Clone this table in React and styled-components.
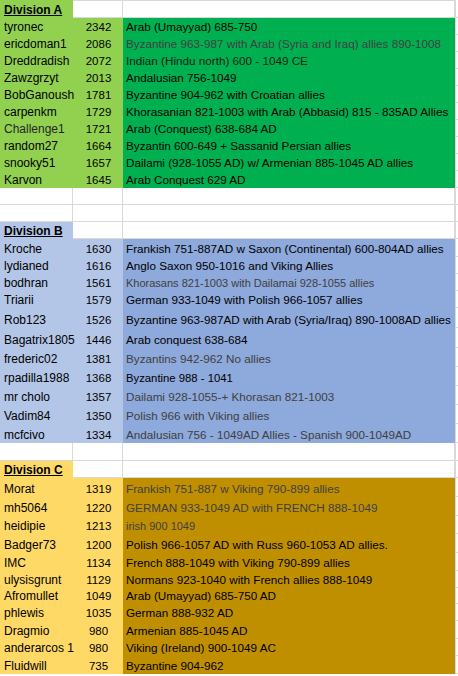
import React from 'react'
import styled, { createGlobalStyle } from 'styled-components'

const GlobalStyle = createGlobalStyle`
  html, body {
    margin: 0;
    padding: 0;
    background: #ffffff;
  }
  body {
    font-family: "Liberation Sans", Arial, sans-serif;
    font-size: 12px;
    color: #000;
  }
`

const GRID = '#d9d9d9'

const fills = {
  A: { light: '#92d050', dark: '#00b050' },
  B: { light: '#b4c6e7', dark: '#8ea9db' },
  C: { light: '#ffd966', dark: '#bf8f00' },
}

const Sheet = styled.div`
  width: 458px;
  display: flex;
  flex-direction: column;
  overflow: hidden;
`

const Row = styled.div`
  display: grid;
  grid-template-columns: 73px 50px 332px 1fr;
  height: ${p => p.$h}px;
`

const Cell = styled.div`
  display: flex;
  align-items: flex-end;
  padding-bottom: 1px;
  line-height: 14px;
  white-space: nowrap;
  overflow: visible;
  box-sizing: border-box;
  min-width: 0;
`

const Blank = styled(Cell)`
  border-bottom: 1px solid ${GRID};
  border-right: 1px solid ${GRID};
  border-top: ${p => (p.$top ? `1px solid ${GRID}` : '0')};
`

const Edge = styled(Cell)`
  border-left: 1px solid ${GRID};
  border-bottom: 1px solid ${GRID};
`

const Title = styled(Cell)`
  background: ${p => fills[p.$div].light};
  padding-left: 4px;
  font-weight: bold;
  text-decoration: underline;
`

const Name = styled(Cell)`
  background: ${p => fills[p.$div].light};
  padding-left: 4px;
  color: ${p => p.$color || '#000'};
  position: relative;
  z-index: 1;
`

const Score = styled(Cell)`
  background: ${p => fills[p.$div].light};
  justify-content: center;
  padding-left: 1px;
  font-size: 11.5px;
`

const Army = styled(Cell)`
  background: ${p => fills[p.$div].dark};
  padding-left: 3px;
  color: ${p => p.$color || '#000'};
  font-size: ${p => p.$size || 11.7}px;
`

const GREY = '#404040'

const divisions = [
  {
    id: 'A',
    title: 'Division A',
    head: 18,
    players: [
      ['tyronec', '2342', 'Arab (Umayyad) 685-750', 17],
      ['ericdoman1', '2086', 'Byzantine 963-987 with Arab (Syria and Iraq) allies 890-1008', 17, GREY],
      ['Dreddradish', '2072', 'Indian (Hindu north) 600 - 1049 CE', 17, '#0d1f10'],
      ['Zawzgrzyt', '2013', 'Andalusian 756-1049', 17],
      ['BobGanoush', '1781', 'Byzantine 904-962 with Croatian allies', 17],
      ['carpenkm', '1729', 'Khorasanian 821-1003 with Arab (Abbasid) 815 - 835AD Allies', 17],
      ['Challenge1', '1721', 'Arab (Conquest) 638-684 AD', 17, null, '#262626'],
      ['random27', '1664', 'Byzantin 600-649 + Sassanid Persian allies', 17],
      ['snooky51', '1657', 'Dailami (928-1055 AD) w/ Armenian 885-1045 AD allies', 17],
      ['Karvon', '1645', 'Arab Conquest 629 AD', 17],
    ],
    after: [17, 17],
  },
  {
    id: 'B',
    title: 'Division B',
    head: 17,
    players: [
      ['Kroche', '1630', 'Frankish 751-887AD w Saxon (Continental) 600-804AD allies', 18],
      ['lydianed', '1616', 'Anglo Saxon 950-1016 and Viking Allies', 17],
      ['bodhran', '1561', 'Khorasans 821-1003 with Dailamai 928-1055 allies', 17, GREY, null, 11],
      ['Triarii', '1579', 'German 933-1049 with Polish 966-1057 allies', 17],
      ['Rob123', '1526', 'Byzantine 963-987AD with Arab (Syria/Iraq) 890-1008AD allies', 20],
      ['Bagatrix1805', '1446', 'Arab conquest 638-684', 20],
      ['frederic02', '1381', 'Byzantins 942-962 No allies', 19, GREY],
      ['rpadilla1988', '1368', 'Byzantine 988 - 1041', 19, null, null, 11.3],
      ['mr cholo', '1357', 'Dailami 928-1055-+ Khorasan 821-1003', 19, GREY],
      ['Vadim84', '1350', 'Polish 966 with Viking allies', 19, GREY],
      ['mcfcivo', '1334', 'Andalusian 756 - 1049AD Allies - Spanish 900-1049AD', 19, GREY],
    ],
    after: [18],
  },
  {
    id: 'C',
    title: 'Division C',
    head: 17,
    players: [
      ['Morat', '1319', 'Frankish 751-887 w Viking 790-899 allies', 19, GREY],
      ['mh5064', '1220', 'GERMAN 933-1049 AD with FRENCH 888-1049', 19, GREY],
      ['heidipie', '1213', 'irish 900 1049', 18, GREY, null, 11],
      ['Badger73', '1200', 'Polish 966-1057 AD with Russ 960-1053 AD allies.', 19],
      ['IMC', '1134', 'French 888-1049 with Viking 790-899 allies', 18],
      ['ulysisgrunt', '1129', 'Normans 923-1040 with French allies 888-1049', 17],
      ['Afromullet', '1049', 'Arab (Umayyad) 685-750 AD', 16],
      ['phlewis', '1035', 'German 888-932 AD', 17],
      ['Dragmio', '980', 'Armenian 885-1045 AD', 18],
      ['anderarcos 1', '980', 'Viking (Ireland) 900-1049 AC', 17],
      ['Fluidwill', '735', 'Byzantine 904-962', 18],
    ],
    after: [],
  },
]

const EmptyRow = ({ h }) => (
  <Row $h={h}>
    <Blank />
    <Blank />
    <Blank />
    <Edge />
  </Row>
)

const Division = ({ div, first }) => (
  <>
    <Row $h={div.head}>
      <Title $div={div.id}>{div.title}</Title>
      <Blank $top={first} />
      <Blank $top={first} />
      <Edge />
    </Row>
    {div.players.map(([name, score, army, h, armyColor, nameColor, size]) => (
      <Row key={name} $h={h}>
        <Name $div={div.id} $color={nameColor}>{name}</Name>
        <Score $div={div.id}>{score}</Score>
        <Army $div={div.id} $color={armyColor} $size={size}>{army}</Army>
        <Edge />
      </Row>
    ))}
    {div.after.map((h, i) => (
      <EmptyRow key={i} h={h} />
    ))}
  </>
)

export default function App() {
  return (
    <>
      <GlobalStyle />
      <Sheet>
        {divisions.map((d, i) => (
          <Division key={d.id} div={d} first={i === 0} />
        ))}
      </Sheet>
    </>
  )
}
